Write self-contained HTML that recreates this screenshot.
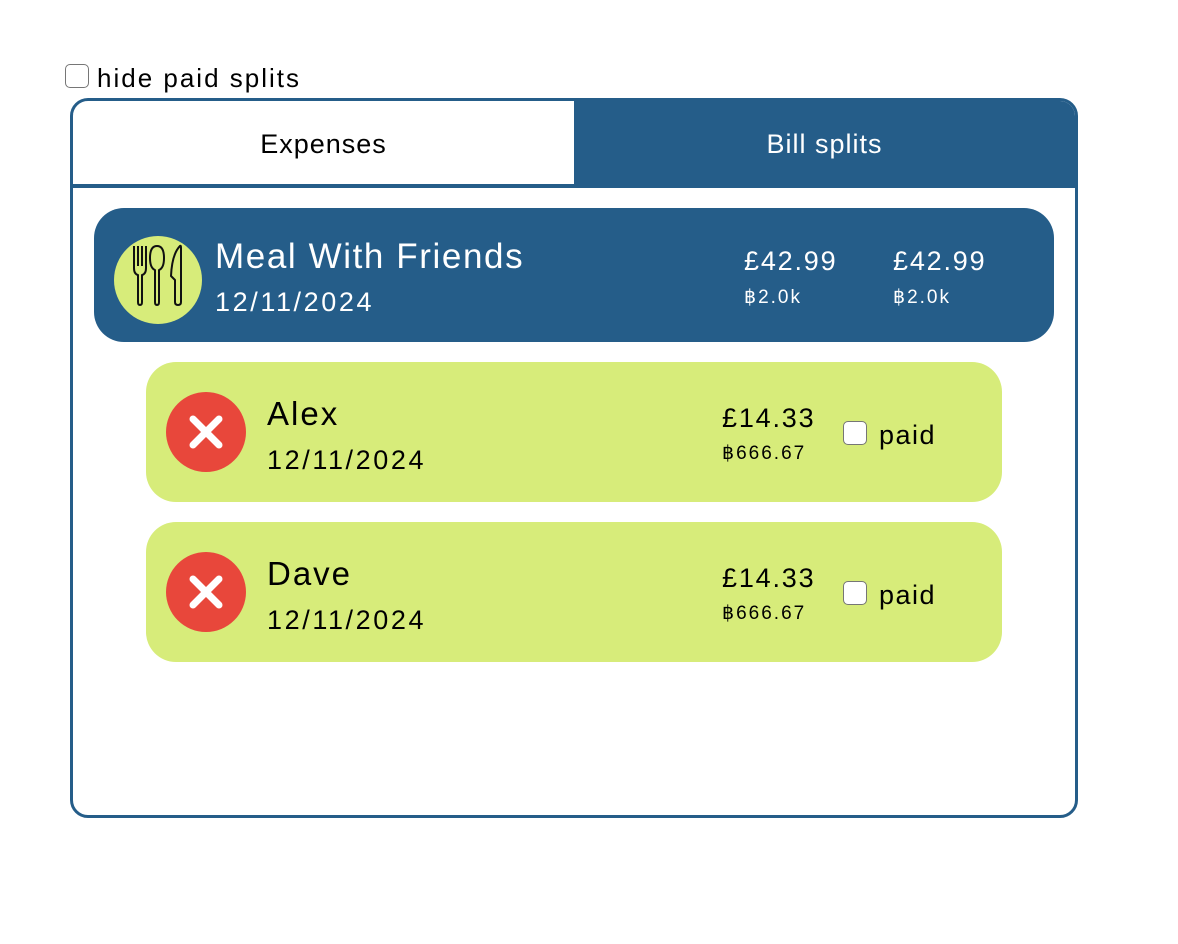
<!DOCTYPE html>
<html><head><meta charset="utf-8"><style>
*{margin:0;padding:0;box-sizing:border-box}
body{width:1178px;height:944px;background:#fff;position:relative;font-family:"Liberation Sans",sans-serif;overflow:hidden}
.a{position:absolute;white-space:nowrap}
.cb{position:absolute;width:24px;height:24px;border:1.5px solid #767676;border-radius:5px;background:#fff}
.box{position:absolute;left:70px;top:98px;width:1008px;height:720px;border:3px solid #255d89;border-radius:18px;overflow:hidden}
.blue{background:#255d89}
.lime{background:#d7ec7a}
.amt{font-size:27px;line-height:34px;letter-spacing:1.8px}
.sm{font-size:19px;line-height:26px;letter-spacing:2px}
.dt{font-size:27px;line-height:34px;letter-spacing:2.6px}
</style></head><body>
<div class="cb" style="left:65px;top:64px"></div>
<div class="a" style="left:97px;top:62px;font-size:26px;line-height:32px;color:#000;letter-spacing:2px">hide paid splits</div>

<div class="box">
  <div class="a blue" style="left:0;top:0;width:1002px;height:87px"></div>
  <div class="a" style="left:0;top:0;width:501px;height:83px;background:#fff"></div>
  <div class="a" style="left:0;top:27px;width:501px;text-align:center;font-size:27px;line-height:32px;color:#000;letter-spacing:1px">Expenses</div>
  <div class="a" style="left:501px;top:27px;width:501px;text-align:center;font-size:27px;line-height:32px;color:#fff;letter-spacing:1px">Bill splits</div>
</div>

<div class="a blue" style="left:94px;top:208px;width:960px;height:134px;border-radius:30px"></div>
<div class="a lime" style="left:114px;top:236px;width:88px;height:88px;border-radius:50%"></div>
<svg class="a" style="left:114px;top:236px" width="88" height="88" viewBox="0 0 88 88" fill="none" stroke="#111" stroke-width="2" stroke-linejoin="round">
  <path d="M20 10 V32 Q20 38 24 39 V66 Q24 69 26 69 Q28 69 28 66 V39 Q32 38 32 32 V10 M24 10 V30 M28 10 V30"/>
  <path d="M43 10 Q36 10 36 22 Q36 32 41 34 V66 Q41 69 43 69 Q45 69 45 66 V34 Q50 32 50 22 Q50 10 43 10 Z"/>
  <path d="M66 10 Q58 18 57 40 L61 44 V66 Q61 69 64 69 Q67 69 67 66 V12 Q67 9 66 10 Z"/>
</svg>
<div class="a" style="left:215px;top:236px;font-size:35px;line-height:42px;color:#fff;letter-spacing:1.6px">Meal With Friends</div>
<div class="a dt" style="left:215px;top:285px;color:#fff">12/11/2024</div>
<div class="a amt" style="left:744px;top:244px;color:#fff">£42.99</div>
<div class="a sm" style="left:744px;top:285px;color:#fff">฿2.0k</div>
<div class="a amt" style="left:893px;top:244px;color:#fff">£42.99</div>
<div class="a sm" style="left:893px;top:285px;color:#fff">฿2.0k</div>

<!-- split 1 -->
<div class="a lime" style="left:146px;top:362px;width:856px;height:140px;border-radius:30px"></div>
<div class="a" style="left:166px;top:392px;width:80px;height:80px;border-radius:50%;background:#e8473b"></div>
<svg class="a" style="left:166px;top:392px" width="80" height="80"><path d="M27 27 L53 53 M53 27 L27 53" stroke="#fff" stroke-width="7" stroke-linecap="round"/></svg>
<div class="a" style="left:267px;top:394px;font-size:33px;line-height:40px;color:#000;letter-spacing:2px">Alex</div>
<div class="a dt" style="left:267px;top:443px;color:#000">12/11/2024</div>
<div class="a amt" style="left:722px;top:401px;color:#000">£14.33</div>
<div class="a sm" style="left:722px;top:441px;color:#000">฿666.67</div>
<div class="cb" style="left:843px;top:421px"></div>
<div class="a" style="left:879px;top:418px;font-size:27px;line-height:34px;color:#000;letter-spacing:1.5px">paid</div>

<!-- split 2 -->
<div class="a lime" style="left:146px;top:522px;width:856px;height:140px;border-radius:30px"></div>
<div class="a" style="left:166px;top:552px;width:80px;height:80px;border-radius:50%;background:#e8473b"></div>
<svg class="a" style="left:166px;top:552px" width="80" height="80"><path d="M27 27 L53 53 M53 27 L27 53" stroke="#fff" stroke-width="7" stroke-linecap="round"/></svg>
<div class="a" style="left:267px;top:554px;font-size:33px;line-height:40px;color:#000;letter-spacing:2px">Dave</div>
<div class="a dt" style="left:267px;top:603px;color:#000">12/11/2024</div>
<div class="a amt" style="left:722px;top:561px;color:#000">£14.33</div>
<div class="a sm" style="left:722px;top:601px;color:#000">฿666.67</div>
<div class="cb" style="left:843px;top:581px"></div>
<div class="a" style="left:879px;top:578px;font-size:27px;line-height:34px;color:#000;letter-spacing:1.5px">paid</div>
</body></html>
